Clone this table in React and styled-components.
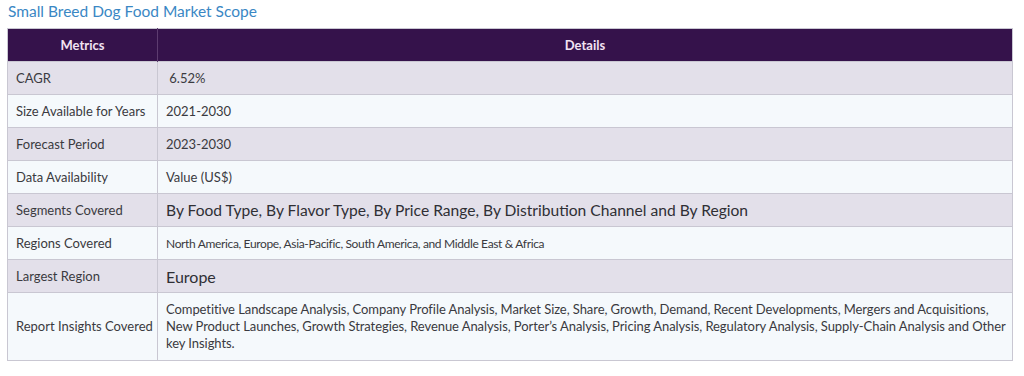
import React from "react";
import styled, { createGlobalStyle } from "styled-components";

const Global = createGlobalStyle`
  html, body { margin: 0; padding: 0; background: #ffffff; }
  body { font-family: Lato, "Open Sans", sans-serif; }
`;

const Page = styled.div`
  padding: 0 12px 0 7px;
  width: 1024px;
  box-sizing: border-box;
`;

const Title = styled.h2`
  margin: 0;
  padding: 1px 0 0 1px;
  height: 27px;
  font-family: Lato, sans-serif;
  font-weight: 400;
  font-size: 15.5px;
  line-height: 20px;
  color: #3a87c4;
`;

const Table = styled.table`
  width: 1006px;
  border-collapse: collapse;
  table-layout: fixed;
  border: 1px solid #c9c7d2;
  font-family: Lato, sans-serif;
`;

const Head = styled.th`
  background: #35124b;
  color: #f2e3f3;
  font-weight: 700;
  font-size: 13px;
  height: 33px;
  padding: 0;
  text-align: center;
  border-right: 1px solid #5d3c70;
  box-sizing: border-box;
  &:last-child { border-right: none; }
`;

const Row = styled.tr`
  background: ${(p) => (p.$alt ? "#e3e0ea" : "#f5f9fc")};
`;

const Cell = styled.td`
  border: 1px solid #c9c7d2;
  height: ${(p) => (p.$tall ? "68px" : "33px")};
  padding: 0 ${(p) => (p.$key ? "2px" : "3px")} 0 8px;
  box-sizing: border-box;
  white-space: ${(p) => (p.$key ? "nowrap" : "normal")};
  font-size: ${(p) => p.$size || 13}px;
  line-height: 17px;
  color: ${(p) => (p.$size && p.$size > 13 ? "#2f2f35" : "#3a3a40")};
  vertical-align: middle;
  letter-spacing: ${(p) => p.$ls || 0}px;
`;

const rows = [
  ["CAGR", "\u00a06.52%"],
  ["Size Available for Years", "2021-2030"],
  ["Forecast Period", "2023-2030"],
  ["Data Availability", "Value (US$)"],
  ["Segments Covered", "By Food Type, By Flavor Type, By Price Range, By Distribution Channel and By Region", 15.6],
  ["Regions Covered", "North America, Europe, Asia-Pacific, South America, and Middle East & Africa", 12, -0.35],
  ["Largest Region", "Europe", 16],
  [
    "Report Insights Covered",
    "Competitive Landscape Analysis, Company Profile Analysis, Market Size, Share, Growth, Demand, Recent Developments, Mergers and Acquisitions, New Product Launches, Growth Strategies, Revenue Analysis, Porter\u2019s Analysis, Pricing Analysis, Regulatory Analysis, Supply-Chain Analysis and Other key Insights.",
    13,
    -0.07,
  ],
];

export default function App() {
  return (
    <Page>
      <Global />
      <Title>Small Breed Dog Food Market Scope</Title>
      <Table>
        <colgroup>
          <col style={{ width: "150px" }} />
          <col />
        </colgroup>
        <thead>
          <tr>
            <Head>Metrics</Head>
            <Head>Details</Head>
          </tr>
        </thead>
        <tbody>
          {rows.map(([k, v, size, ls], i) => {
            const tall = i === rows.length - 1;
            return (
              <Row key={k} $alt={i % 2 === 0}>
                <Cell $tall={tall} $key>
                  {k}
                </Cell>
                <Cell $tall={tall} $size={size} $ls={ls}>
                  {v}
                </Cell>
              </Row>
            );
          })}
        </tbody>
      </Table>
    </Page>
  );
}
